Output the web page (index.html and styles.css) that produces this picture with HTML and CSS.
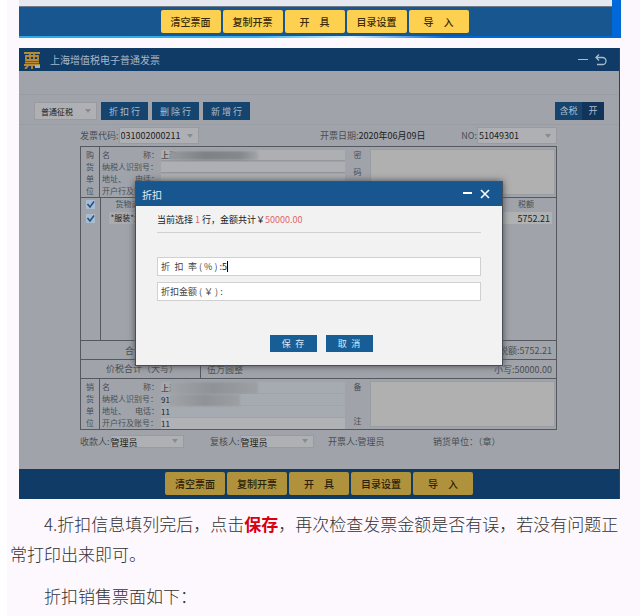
FILE: index.html
```html
<!DOCTYPE html>
<html lang="zh-CN">
<head>
    <meta charset="UTF-8">
    <meta name="viewport" content="width=device-width, initial-scale=1.0">
    <title>折扣发票开具</title>
    <link rel="stylesheet" href="styles.css">
</head>
<body>
    <main class="article">
        <div class="shot shot-top">
            <div class="shot-top-page"></div>
            <div class="action-bar">
                <button type="button">清空票面</button>
                <button type="button">复制开票</button>
                <button type="button">开&emsp;具</button>
                <button type="button">目录设置</button>
                <button type="button">导&emsp;入</button>
            </div>
        </div>

        <div class="shot app">
            <header class="app-header">
                <svg class="logo" viewBox="0 0 18 18" fill="none" stroke="#b88a35" stroke-width="1.8">
                    <path d="M1 2h16M3 5h12v4H3zM7 2v7M11 2v7M2 11.500h14M1 14h16M9 14v4M5 15l-3 3"/>
                    <path d="M12 14h5v3h-5z" fill="#9fb4c8" stroke="none"/>
                </svg>
                <span class="app-title">上海增值税电子普通发票</span>
                <button type="button" class="icon-btn" aria-label="最小化">
                    <svg width="10" height="12" viewBox="0 0 10 12" fill="none" stroke="#a9bccd"><path d="M0 5.500h10"/></svg>
                </button>
                <button type="button" class="icon-btn" aria-label="返回">
                    <svg width="12" height="12" viewBox="0 0 12 12" fill="none" stroke="#a9bccd" stroke-width="1.300"><path d="M4 .5L1 3.500l3 3M1 3.500h6.500a3.500 3.500 0 0 1 0 7H2"/></svg>
                </button>
            </header>
            <div class="app-strip"></div>

            <div class="toolbar">
                <select class="tax-type" aria-label="征税方式"><option>普通征税</option></select>
                <button type="button" class="tool">折 扣 行</button>
                <button type="button" class="tool">删 除 行</button>
                <button type="button" class="tool">新 增 行</button>
                <button type="button" class="switch"><span>含税</span><span class="switch-on">开</span></button>
            </div>

            <div class="sheet">
                <div class="sheet-head">
                    <div class="field">
                        <label for="code">发票代码:</label>
                        <select id="code" class="code"><option>031002000211</option></select>
                    </div>
                    <div>开票日期:<b>2020年06月09日</b></div>
                    <div class="field field-right">
                        <label for="no">NO:</label>
                        <select id="no" class="no"><option>51049301</option></select>
                    </div>
                </div>

                <div class="invoice">
                    <section class="party buyer">
                        <div class="side"><span>购</span><span>货</span><span>单</span><span>位</span></div>
                        <div class="party-fields">
                            <label for="b1"><span>名</span><span>称：</span></label>
                            <div class="masked"><input id="b1" value="上海"><i class="mask"></i></div>
                            <label for="b2">纳税人识别号：</label>
                            <input id="b2">
                            <label for="b3"><span>地址、</span><span>电话：</span></label>
                            <input id="b3">
                            <label for="b4">开户行及账号：</label>
                            <input id="b4">
                        </div>
                        <label class="note-label" for="cipher"><span>密</span><span>码</span><span>区</span></label>
                        <textarea id="cipher"></textarea>
                    </section>

                    <table class="items">
                        <thead>
                            <tr>
                                <th class="check"><input type="checkbox" aria-label="全选" checked></th>
                                <th class="goods">货物或应税劳务</th>
                                <th class="tax">税额</th>
                            </tr>
                        </thead>
                        <tbody>
                            <tr>
                                <td class="check"><input type="checkbox" aria-label="选择第一行" checked></td>
                                <td class="goods"><input aria-label="货物名称" value="*服装*女装"></td>
                                <td class="tax"><input aria-label="税额" value="5752.21"></td>
                            </tr>
                            <tr class="filler"><td class="check"></td><td></td><td></td></tr>
                        </tbody>
                    </table>

                    <div class="total"><span class="total-label">合计</span><span>税额:5752.21</span></div>
                    <div class="total sum">
                        <span class="sum-label">价税合计（大写）</span>
                        <span class="sum-words">伍万圆整</span>
                        <span>小写:50000.00</span>
                    </div>

                    <section class="party seller">
                        <div class="side"><span>销</span><span>货</span><span>单</span><span>位</span></div>
                        <div class="party-fields">
                            <label for="s1"><span>名</span><span>称：</span></label>
                            <div class="masked"><input id="s1" value="上海"><i class="mask"></i></div>
                            <label for="s2">纳税人识别号：</label>
                            <div class="masked"><input id="s2" value="913"><i class="mask mask-short"></i></div>
                            <label for="s3"><span>地址、</span><span>电话：</span></label>
                            <input id="s3" value="11">
                            <label for="s4">开户行及账号：</label>
                            <input id="s4" class="lit" value="11">
                        </div>
                        <label class="note-label" for="remark"><span>备</span><span>注</span></label>
                        <textarea id="remark"></textarea>
                    </section>
                </div>

                <div class="signs">
                    <div class="field">
                        <label for="payee">收款人:</label>
                        <select id="payee"><option>管理员</option></select>
                    </div>
                    <div class="field">
                        <label for="checker">复核人:</label>
                        <select id="checker"><option>管理员</option></select>
                    </div>
                    <div>开票人:管理员</div>
                    <div>销货单位：（章）</div>
                </div>
            </div>

            <div class="action-bar dim">
                <button type="button">清空票面</button>
                <button type="button">复制开票</button>
                <button type="button">开&emsp;具</button>
                <button type="button">目录设置</button>
                <button type="button">导&emsp;入</button>
            </div>

            <div class="overlay">
                <form class="dialog" role="dialog" aria-labelledby="dialog-title">
                    <div class="dialog-head">
                        <span id="dialog-title">折扣</span>
                        <button type="button" class="icon-btn" aria-label="最小化">
                            <svg width="10" height="10" viewBox="0 0 10 10" fill="none" stroke="#fff" stroke-width="2"><path d="M0 4h9"/></svg>
                        </button>
                        <button type="button" class="icon-btn" aria-label="关闭">
                            <svg width="10" height="10" viewBox="0 0 10 10" fill="none" stroke="#fff" stroke-width="1.600"><path d="M1 1l8 8M9 1L1 9"/></svg>
                        </button>
                    </div>
                    <div class="dialog-body">
                        <p class="summary">当前选择 <em>1</em> 行，金额共计￥<em>50000.00</em></p>
                        <div class="box">
                            <label for="rate">折&ensp;扣&ensp;率 ( % ) :</label>
                            <input id="rate" class="rate" value="5"><i class="caret"></i>
                        </div>
                        <div class="box">
                            <label for="amount">折扣金额 ( ￥ ) :</label>
                            <input id="amount">
                        </div>
                        <div class="dialog-actions">
                            <button type="button">保&ensp;存</button>
                            <button type="button">取&ensp;消</button>
                        </div>
                    </div>
                </form>
            </div>
        </div>

        <p>4.折扣信息填列完后，点击<strong>保存</strong>，再次检查发票金额是否有误，若没有问题正常打印出来即可。</p>
        <p>折扣销售票面如下：</p>
    </main>
</body>
</html>
```
FILE: styles.css
```css
* {
    box-sizing: border-box;
}
body {
    margin: 0;
    background: #fff;
    font-family: "Noto Sans CJK SC", sans-serif;
}
button, input, select, textarea {
    margin: 0;
    padding: 0;
    border: none;
    border-radius: 0;
    background: none;
    font-family: inherit;
    font-size: inherit;
    color: inherit;
    outline: none;
}
button {
    cursor: pointer;
}
.article {
    margin-left: 7px;
    padding-bottom: 7px;
    background: #fdf8fd;
}
.article p {
    margin: 0 7px 12px 3px;
    font-size: 17px;
    font-weight: 300;
    line-height: 30px;
    color: #333;
    text-indent: 2em;
}
.article strong {
    font-weight: bold;
    color: #d9000f;
}
.shot {
    margin: 0 19px 10px 12px;
}

/* tail of the previous window */
.shot-top {
    padding-bottom: 2px;
    background: linear-gradient(to right, #2fa8e8, #35b2ee 40%, #d5f2fb 56%, #0068d9 72%);
    border-right: 9px solid #0068d9;
}
.shot-top-page {
    height: 7px;
    background: #e5e8ef;
    border-bottom: 1px solid #6f7c8c;
}
.action-bar {
    display: flex;
    justify-content: center;
    gap: 2px;
    padding: 3px 2px 3px 0;
    background: #185690;
}
.action-bar button {
    width: 60px;
    height: 23px;
    border-radius: 2px;
    background: #fdd050;
    font-size: 10px;
    font-weight: 500;
    color: #3a2c08;
}

/* invoice window */
.app {
    position: relative;
    margin-right: 20px;
    border-right: 1px solid #3a3f46;
    background: #a0a4aa;
    font-size: 8px;
    color: #4a4d52;
}
.app-header {
    display: flex;
    align-items: center;
    gap: 7px;
    height: 23px;
    padding: 0 12px 0 4px;
    background: #0f3b66;
}
.logo {
    width: 18px;
    height: 18px;
}
.app-title {
    flex: 1;
    padding-left: 2px;
    font-size: 10px;
    color: #a5b8cb;
}
.icon-btn {
    display: flex;
}
.app-strip {
    height: 24px;
    border-bottom: 1px solid #989ca3;
}
.toolbar {
    display: flex;
    align-items: center;
    gap: 4px;
    height: 30px;
    padding: 3px 15px 0;
    border-bottom: 1px solid #989ca3;
}
select {
    appearance: none;
    border: 1px solid #989ba1;
    background: #aeb0b3 url("data:image/svg+xml,%3Csvg xmlns='http://www.w3.org/2000/svg' width='6' height='4'%3E%3Cpath d='M0 0h6L3 4z' fill='%23888c92'/%3E%3C/svg%3E") no-repeat right 5px center;
    color: #1b1c1e;
}
.tax-type {
    width: 63px;
    height: 18px;
    padding-left: 6px;
}
.tool {
    width: 47px;
    height: 18px;
    background: #15446f;
    font-size: 9px;
    color: #a9bccd;
}
.switch {
    display: flex;
    width: 49px;
    height: 18px;
    margin-left: auto;
    background: #15446f;
    font-size: 9px;
    line-height: 18px;
    color: #a9bccd;
}
.switch span {
    flex: 1;
}
.switch .switch-on {
    flex: 0 0 22px;
    background: #12335a;
}
.sheet {
    margin: 0 62px 0 61px;
}
.sheet-head {
    display: grid;
    grid-template-columns: 240fr 120fr 117fr;
    align-items: center;
    height: 21px;
    font-size: 9px;
    white-space: nowrap;
}
.sheet-head b {
    font-weight: normal;
    color: #1b1c1e;
}
.field {
    display: flex;
    align-items: center;
}
.field-right {
    justify-content: flex-end;
}
.code, .no {
    height: 17px;
    padding-left: 1px;
}
.code {
    width: 80px;
}
.no {
    width: 80px;
}
.invoice {
    border: 1px solid #55585e;
}
.party {
    display: grid;
    grid-template-columns: 19px 245px 25px 1fr;
    height: 50px;
}
.side {
    display: flex;
    flex-direction: column;
    align-items: center;
    padding-top: 2px;
    border-right: 1px solid #55585e;
    line-height: 12px;
}
.party-fields {
    display: grid;
    grid-template-columns: 57px 1fr;
    grid-auto-rows: 12px;
    column-gap: 2px;
    align-items: center;
    padding: 2px 0 0 2px;
    line-height: 12px;
}
.party-fields label {
    display: flex;
    justify-content: space-between;
    white-space: nowrap;
}
.party-fields input {
    width: 100%;
    height: 11px;
    border-bottom: 1px solid #94979d;
    background: #adafb2;
    color: #222;
}
.seller .party-fields input {
    border: none;
    background: #a6abb2;
}
.seller .party-fields .lit {
    background: #b0b2b5;
}
.masked {
    position: relative;
    display: flex;
}
.mask {
    position: absolute;
    top: 1px;
    left: 9px;
    width: 88px;
    height: 9px;
    background: linear-gradient(to right, #96999d, #7e8185 40%, #85888c 80%, #a2a4a7);
    filter: blur(1px);
}
.seller .mask {
    top: 0;
    height: 12px;
    background: linear-gradient(to right, #a0a3a6, #8f9296 50%, #9da0a3);
}
.seller .mask-short {
    width: 70px;
}
.note-label {
    display: flex;
    flex-direction: column;
    justify-content: space-between;
    align-items: center;
    padding: 2px 0;
    line-height: 12px;
}
.party textarea {
    margin: 2px 1px 2px 0;
    border: 1px solid #999ca1;
    background: #b0b0b1;
    resize: none;
}
.items {
    width: 100%;
    border-collapse: collapse;
    table-layout: fixed;
    border-top: 1px solid #55585e;
    border-bottom: 1px solid #55585e;
}
.items th, .items td {
    height: 15px;
    padding: 0;
    font-weight: normal;
    text-align: left;
    vertical-align: middle;
    line-height: 12px;
}
.items th {
    height: 13px;
}
.items .check {
    width: 19px;
    border-right: 1px solid #55585e;
    text-align: center;
}
.items .check input {
    appearance: none;
    display: block;
    width: 9px;
    height: 9px;
    margin: 0 auto;
    background: #a9bdd0 url("data:image/svg+xml,%3Csvg xmlns='http://www.w3.org/2000/svg' width='9' height='9'%3E%3Cpath d='M1.500 4l2.500 3L8 1.500' fill='none' stroke='%23234f86' stroke-width='1.500'/%3E%3C/svg%3E") no-repeat;
}
.items th.goods {
    padding-left: 15px;
}
.items td.goods input {
    width: 80px;
    height: 12px;
    margin-left: 8px;
    padding-left: 2px;
    background: #aaacb0;
    color: #1b1c1e;
}
.items .tax {
    width: 60px;
    text-align: center;
}
.items .tax input {
    display: block;
    width: 56px;
    height: 12px;
    padding-right: 2px;
    background: #b0b1b3;
    font-size: 9px;
    text-align: right;
    color: #222;
}
.items .filler td {
    height: 115px;
}
.total {
    display: flex;
    justify-content: space-between;
    align-items: center;
    height: 19px;
    padding-right: 4px;
    border-bottom: 1px solid #55585e;
    font-size: 9px;
}
.total-label {
    padding-left: 44px;
}
.sum-label {
    width: 120px;
    height: 100%;
    padding-left: 25px;
    border-right: 1px solid #55585e;
    line-height: 18px;
}
.sum-words {
    flex: 1;
    padding-left: 6px;
}
.signs {
    display: grid;
    grid-template-columns: 130fr 118fr 105fr 124fr;
    align-items: center;
    height: 39px;
    padding-bottom: 17px;
    font-size: 9px;
}
.signs select {
    width: 74px;
    height: 13px;
}
.dim {
    padding: 3px 0 4px;
    background: #0f3b66;
}
.dim button {
    background: #b0923d;
    color: #2a2209;
}

/* discount dialog */
.overlay {
    position: absolute;
    inset: 0;
    display: flex;
    justify-content: center;
    align-items: center;
}
.dialog {
    width: 368px;
    border: 1px solid #4a4f56;
    background: #f2f2f2;
    box-shadow: 0 0 7px #4a4d52;
    color: #444;
}
.dialog-head {
    display: flex;
    align-items: center;
    gap: 7px;
    height: 24px;
    padding: 0 12px 0 6px;
    background: #185690;
    font-size: 10px;
    color: #e3ecf5;
}
.dialog-head span {
    flex: 1;
}
.dialog-body {
    padding: 5px 21px 13px;
}
.dialog-body .summary {
    margin: 0 0 24px;
    padding-bottom: 3px;
    border-bottom: 1px solid #d0d0d0;
    font-size: 9px;
    font-weight: normal;
    line-height: 18px;
    text-indent: 0;
    color: #222;
}
.summary em {
    font-style: normal;
    color: #e0696b;
}
.box {
    display: flex;
    align-items: center;
    height: 19px;
    margin-bottom: 6px;
    padding-left: 3px;
    border: 1px solid #d0d0d0;
    background: #fff;
    font-size: 9px;
}
.box input {
    flex: 1;
    min-width: 0;
}
.box .rate {
    flex: 0 0 5px;
    color: #111;
}
.caret {
    width: 1px;
    height: 11px;
    background: #000;
}
.dialog-actions {
    display: flex;
    justify-content: center;
    gap: 9px;
    padding: 28px 0 0 4px;
}
.dialog-actions button {
    width: 47px;
    height: 17px;
    background: #185e96;
    font-size: 9px;
    color: #dbe8f3;
}
```
